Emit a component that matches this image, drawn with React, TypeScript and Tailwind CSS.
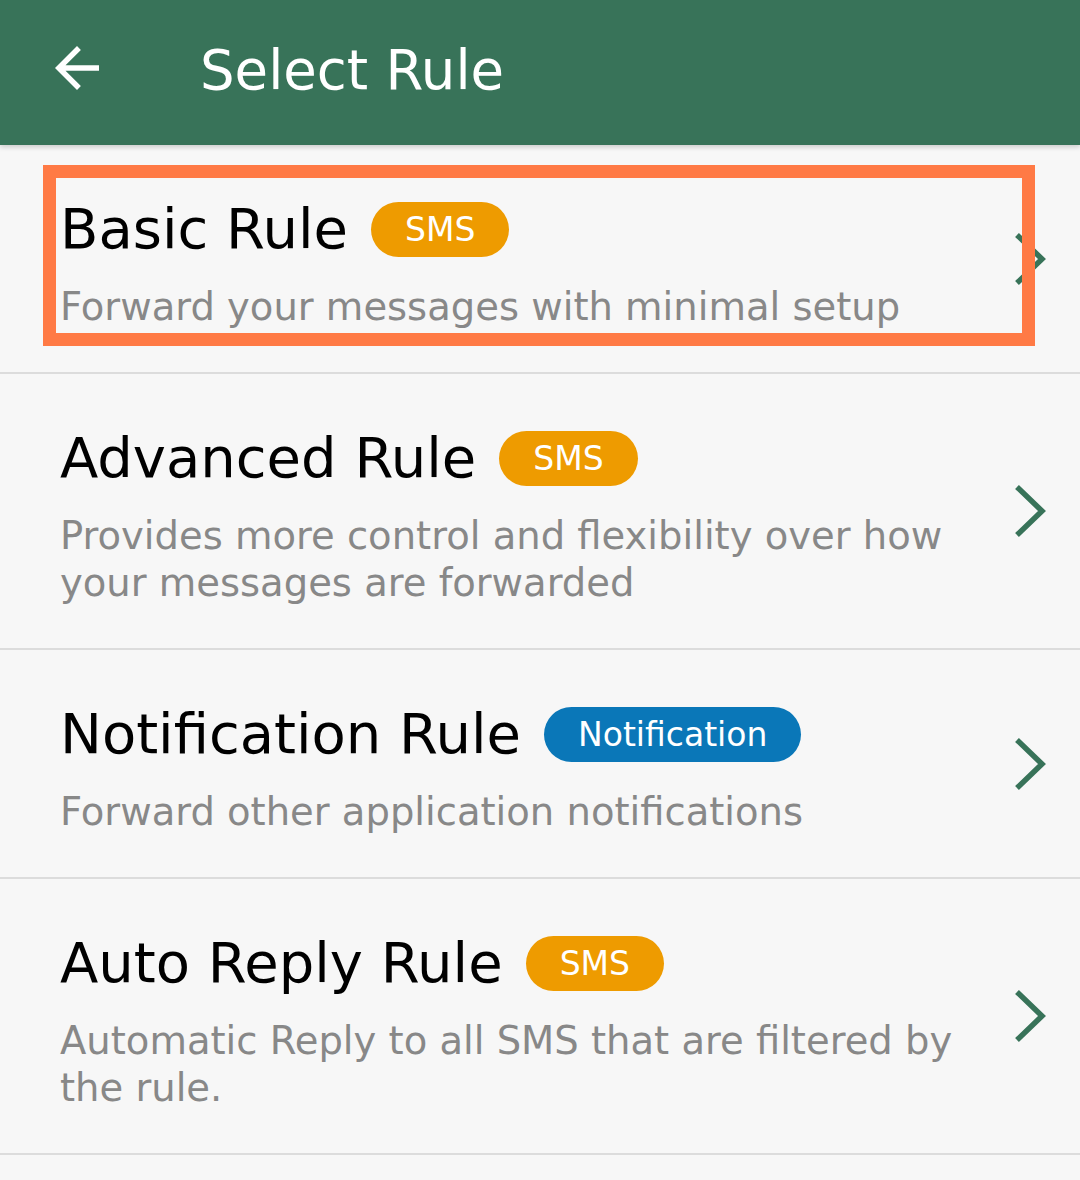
type Rule = {
  title: string
  badge: string
  kind: 'sms' | 'notification'
  description: string
  highlighted?: boolean
}

const rules: Rule[] = [
  {
    title: 'Basic Rule',
    badge: 'SMS',
    kind: 'sms',
    description: 'Forward your messages with minimal setup',
    highlighted: true,
  },
  {
    title: 'Advanced Rule',
    badge: 'SMS',
    kind: 'sms',
    description: 'Provides more control and flexibility over how your messages are forwarded',
  },
  {
    title: 'Notification Rule',
    badge: 'Notification',
    kind: 'notification',
    description: 'Forward other application notifications',
  },
  {
    title: 'Auto Reply Rule',
    badge: 'SMS',
    kind: 'sms',
    description: 'Automatic Reply to all SMS that are filtered by the rule.',
  },
]

function BackArrow() {
  return (
    <svg width="66" height="66" viewBox="0 0 24 24" className="shrink-0">
      <path fill="#ffffff" d="M20 11H7.83l5.59-5.59L12 4l-8 8 8 8 1.41-1.41L7.83 13H20v-2z" />
    </svg>
  )
}

function Chevron() {
  return (
    <svg width="34" height="56" viewBox="0 0 34 56" fill="none" className="shrink-0">
      <polyline points="4,4 29,28 4,52" stroke="#387359" strokeWidth={5.5} strokeLinejoin="miter" />
    </svg>
  )
}

function RuleRow({ rule }: { rule: Rule }) {
  return (
    <div className="relative flex items-center border-b-2 border-[#dcdcdc] pr-[33px]">
      <div className="flex-1 pl-[60px] pt-[52px] pb-[42px]">
        <div className="flex items-center gap-[23px]">
          <span className="text-[56px] leading-[64px] text-black">{rule.title}</span>
          <span
            className={
              rule.kind === 'sms'
                ? 'flex h-[55px] items-center rounded-full bg-[#ee9b00] px-[34px] text-[33px] leading-none text-white'
                : 'flex h-[55px] items-center rounded-full bg-[#0a77b8] px-[34px] text-[33px] leading-none text-white'
            }
          >
            {rule.badge}
          </span>
        </div>
        <p className="mt-[22px] max-w-[940px] text-[38.5px] leading-[47px] text-[#888888]">{rule.description}</p>
      </div>
      <Chevron />

      {/* highlight frame drawn over the first row */}
      {rule.highlighted && (
        <div className="pointer-events-none absolute left-[43px] top-[20px] h-[181px] w-[992px] border-[13px] border-[#ff7a45]" />
      )}
    </div>
  )
}

export default function App() {
  return (
    <div className="min-h-screen bg-[#f7f7f7] font-['DejaVu_Sans',sans-serif]">
      <header className="relative z-10 flex h-[145px] items-start bg-[#387359] shadow-[0_2px_5px_rgba(0,0,0,0.18)]">
        <div className="ml-[44px] mt-[35px]">
          <BackArrow />
        </div>
        <h1 className="ml-[90px] mt-[39px] text-[54.5px] leading-[63px] text-white">Select Rule</h1>
      </header>

      <main>
        {rules.map((rule) => (
          <RuleRow key={rule.title} rule={rule} />
        ))}
      </main>
    </div>
  )
}
